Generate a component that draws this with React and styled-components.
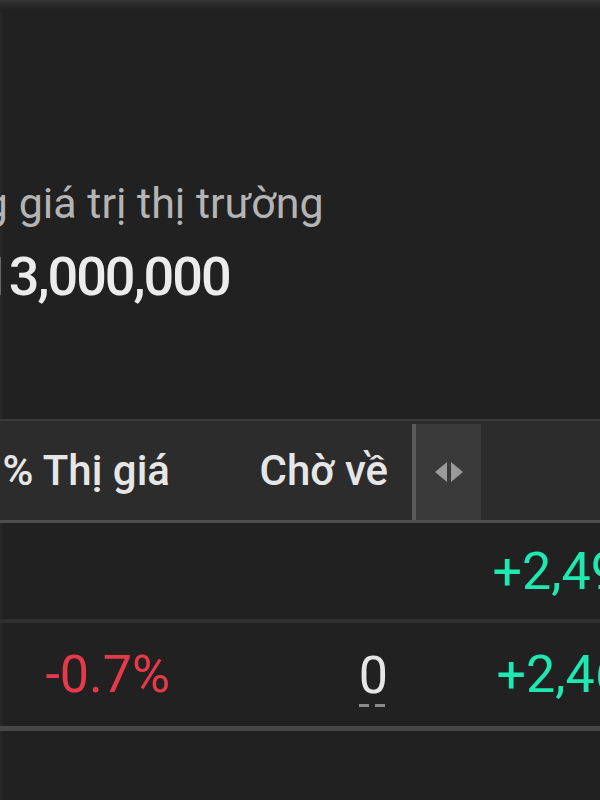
import React from "react";
import styled, { createGlobalStyle } from "styled-components";

const Global = createGlobalStyle`
  html, body { margin: 0; padding: 0; background: #212121; }
  body { font-family: Roboto, "Noto Sans", "Liberation Sans", sans-serif; overflow: hidden; }
`;

const Page = styled.div`
  width: 600px;
  height: 800px;
  overflow: hidden;
  background: #212121;
  box-shadow: inset 4px 0 4px -2px rgba(255, 255, 255, 0.04);
`;

const TopEdge = styled.div`
  height: 12px;
  background: linear-gradient(#363636 0, #2c2c2c 4px, #232323 9px, #212121 12px);
`;

const Summary = styled.section`
  margin-top: 169px;
  margin-left: -88px;
  display: flex;
  flex-direction: column;
  align-items: flex-start;
  gap: 19px;
`;

const StatLabel = styled.div`
  font-size: 43px;
  line-height: 45px;
  color: #b4b4b4;
  white-space: nowrap;
`;

const StatValue = styled.div`
  margin-left: ${(p) => p.$shift || 0}px;
  font-size: 54px;
  line-height: 63px;
  font-weight: 500;
  letter-spacing: -2px;
  color: #ececec;
  white-space: nowrap;
`;

const Table = styled.div`
  margin-top: 111px;
  margin-left: -100px;
  width: 800px;
`;

const cols = "295px 217px 69px 219px";

const HeaderRow = styled.div`
  display: grid;
  grid-template-columns: ${cols};
  height: 99px;
  background: #2c2c2c;
  border-top: 2px solid #3b3b3b;
  border-bottom: 3px solid #4e4e4e;
`;

const HeadCell = styled.div`
  display: flex;
  align-items: center;
  justify-content: flex-end;
  padding-right: ${(p) => p.$pr ?? 25}px;
  font-size: 42px;
  font-weight: 500;
  color: #e6e6e6;
  white-space: nowrap;
`;

const Handle = styled.div`
  margin-top: 3px;
  background: #3a3a3a;
  border-left: 4px solid #5a5a5a;
  display: flex;
  align-items: center;
  justify-content: center;
`;

const Row = styled.div`
  display: grid;
  grid-template-columns: ${cols};
  height: ${(p) => p.$h}px;
  border-bottom: ${(p) => p.$bw}px solid ${(p) => p.$bc};
`;

const Cell = styled.div`
  display: flex;
  align-items: center;
  justify-content: flex-end;
  padding-right: ${(p) => p.$pr ?? 25}px;
  font-size: 52px;
  color: ${(p) => p.$color || "#e6e6e6"};
  white-space: nowrap;
`;

const Dotted = styled.span`
  display: inline-block;
  line-height: 46px;
  padding-bottom: 8px;
  background-image: linear-gradient(to right, #8a8a8a 10px, transparent 10px);
  background-size: 16px 3px;
  background-repeat: repeat-x;
  background-position: left bottom;
  margin-top: 10px;
`;

function ResizeIcon() {
  return (
    <svg width="32" height="24" viewBox="0 0 32 24">
      <path d="M14 2 L2 12 L14 22 Z" fill="#9a9a9a" />
      <path d="M18 2 L30 12 L18 22 Z" fill="#9a9a9a" />
    </svg>
  );
}

export default function App() {
  return (
    <Page>
      <Global />
      <TopEdge />
      <Summary>
        <StatLabel>Tổng giá trị thị trường</StatLabel>
        <StatValue $shift={68}>13,000,000</StatValue>
      </Summary>
      <Table>
        <HeaderRow>
          <HeadCell>% Thị giá</HeadCell>
          <HeadCell $pr={24}>Chờ về</HeadCell>
          <Handle>
            <ResizeIcon />
          </Handle>
          <HeadCell />
        </HeaderRow>
        <Row $h={96} $bw={4} $bc="#303030">
          <Cell />
          <Cell />
          <Cell />
          <Cell $color="#1de9b0" $pr={42}>+2,49%</Cell>
        </Row>
        <Row $h={103} $bw={5} $bc="#474747">
          <Cell $color="#e63a4a">-0.7%</Cell>
          <Cell $pr={24}>
            <Dotted>0</Dotted>
          </Cell>
          <Cell />
          <Cell $color="#1de9b0" $pr={38}>+2,46%</Cell>
        </Row>
      </Table>
    </Page>
  );
}
